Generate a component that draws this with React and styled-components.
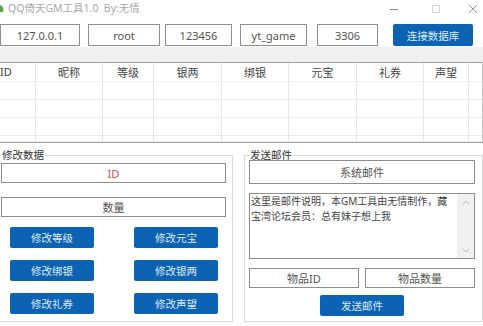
import React from 'react'
import styled, { createGlobalStyle } from 'styled-components'

const GlobalStyle = createGlobalStyle`
  html, body { margin: 0; padding: 0; background: #fff; }
  body {
    font-family: "Noto Sans", "Noto Sans CJK SC", sans-serif;
    font-size: 10.5px;
    color: #333;
  }
  * { box-sizing: border-box; }
`

const columns = ['ID', '昵称', '等级', '银两', '绑银', '元宝', '礼券', '声望', '']
const buttons = ['修改等级', '修改元宝', '修改绑银', '修改银两', '修改礼券', '修改声望']

const App = () => {
    return (
        <Window>
            <GlobalStyle />
            <TitleBar>
                <svg width="4" height="9" viewBox="0 0 4 9">
                    <path d="M0 1 C3 2 4 5 3 8 L0 8 Z" fill="#5aa845" />
                </svg>
                <Title>QQ倚天GM工具1.0&nbsp; By:无情</Title>
                <WinControls>
                    <WinButton>
                        <svg width="10" height="10" viewBox="0 0 10 10">
                            <path d="M1 5.5 H9" stroke="#8a8a8a" strokeWidth="1" />
                        </svg>
                    </WinButton>
                    <WinButton>
                        <svg width="10" height="10" viewBox="0 0 10 10">
                            <rect x="1.5" y="1.5" width="7" height="7" fill="none" stroke="#d4d4d4" strokeWidth="1" />
                        </svg>
                    </WinButton>
                    <WinButton>
                        <svg width="10" height="10" viewBox="0 0 10 10">
                            <path d="M1 1 L9 9 M9 1 L1 9" stroke="#999" strokeWidth="1" />
                        </svg>
                    </WinButton>
                </WinControls>
            </TitleBar>

            <ConnRow>
                <Field $w={80}>127.0.0.1</Field>
                <Field $w={72} $ml={8}>root</Field>
                <Field $w={67} $ml={5}>123456</Field>
                <Field $w={67} $ml={8}>yt_game</Field>
                <Field $w={61} $ml={10}>3306</Field>
                <BlueButton $w={80} $h={22} $ml={15}>连接数据库</BlueButton>
            </ConnRow>

            <Band />

            <Table>
                {columns.map((c, i) => (
                    <Cell key={'h' + i} $head $left={i === 0}>{c}</Cell>
                ))}
                {[0, 1, 2, 3].map(r =>
                    columns.map((c, i) => <Cell key={r + '-' + i} />)
                )}
            </Table>

            <Bottom>
                <Group $w={234} $ml={-1} $pad="0 6px 7px 1px">
                    <Legend>修改数据</Legend>
                    <Field $h={20} $mt={3} $color="#c9514c">ID</Field>
                    <Field $h={20} $mt={14}>数量</Field>
                    <ButtonGrid>
                        {buttons.map(b => (
                            <BlueButton key={b}>{b}</BlueButton>
                        ))}
                    </ButtonGrid>
                </Group>

                <Group $w={239} $pad="0 7px 5px 4px">
                    <Legend>发送邮件</Legend>
                    <Field $h={24}>系统邮件</Field>
                    <TextBox>
                        <TextBody>这里是邮件说明，本GM工具由无情制作，藏宝湾论坛会员：总有妹子想上我</TextBody>
                        <ScrollBar>
                            <svg width="8" height="5" viewBox="0 0 8 5">
                                <path d="M1 4 L4 1 L7 4" fill="none" stroke="#bdbdbd" strokeWidth="1" />
                            </svg>
                            <svg width="8" height="5" viewBox="0 0 8 5">
                                <path d="M1 1 L4 4 L7 1" fill="none" stroke="#bdbdbd" strokeWidth="1" />
                            </svg>
                        </ScrollBar>
                    </TextBox>
                    <ItemRow>
                        <Field $h={20}>物品ID</Field>
                        <Field $h={20}>物品数量</Field>
                    </ItemRow>
                    <SendRow>
                        <BlueButton>发送邮件</BlueButton>
                    </SendRow>
                </Group>
            </Bottom>
        </Window>
    )
}

const Window = styled.div`
    width: 483px;
    height: 326px;
    overflow: hidden;
    background: #fff;
    display: flex;
    flex-direction: column;
`

const TitleBar = styled.div`
    height: 24px;
    display: flex;
    align-items: flex-start;
    padding-top: 4px;
    svg { display: block; }
`

const Title = styled.span`
    margin-left: 4px;
    margin-top: -2px;
    color: #a9a9a9;
    font-size: 10.5px;
    line-height: 13px;
    white-space: pre;
`

const WinControls = styled.div`
    margin-left: auto;
    margin-right: 5px;
    display: flex;
    gap: 27px;
`

const WinButton = styled.div`
    width: 10px;
    height: 10px;
    &:first-child { margin-right: 5px; }
`

const ConnRow = styled.div`
    display: flex;
    height: 22px;
    flex-shrink: 0;
`

const Field = styled.div`
    width: ${p => (p.$w ? p.$w + 'px' : 'auto')};
    height: ${p => (p.$h ? p.$h + 'px' : 'auto')};
    margin-left: ${p => p.$ml || 0}px;
    margin-top: ${p => p.$mt || 0}px;
    flex-shrink: 0;
    border: 1px solid #8e8e8e;
    background: #fff;
    display: flex;
    align-items: center;
    justify-content: center;
    color: ${p => p.$color || '#555'};
    font-size: 11px;
`

const BlueButton = styled.button`
    width: ${p => p.$w || 84}px;
    height: ${p => p.$h || 21}px;
    margin-left: ${p => p.$ml || 0}px;
    flex-shrink: 0;
    padding: 0;
    border: none;
    border-radius: 2px;
    background: #0c63b3;
    color: #dfeaf7;
    font-family: inherit;
    font-size: 10.5px;
    cursor: pointer;
`

const Band = styled.div`
    height: 15px;
    margin-top: 1px;
    background: #f0f0f0;
    flex-shrink: 0;
`

const Table = styled.div`
    height: 81px;
    flex-shrink: 0;
    border-top: 1px solid #a0a0a0;
    border-bottom: 1px solid #a0a0a0;
    border-right: 1px solid #c4c4c4;
    display: grid;
    grid-template-columns: 36px 67px 51px 68px 67px 68px 67px 45px 1fr;
    grid-template-rows: 19px 18px 18px 18px 1fr;
    overflow: hidden;
`

const Cell = styled.div`
    border-right: 1px solid #e6e6e6;
    border-bottom: 1px solid ${p => (p.$head ? '#f2f2f2' : '#ebebeb')};
    display: flex;
    align-items: center;
    justify-content: ${p => (p.$left ? 'flex-start' : 'center')};
    padding-bottom: 1px;
    font-size: 11px;
    color: #444;
    &:nth-child(9n) { border-right: none; }
`

const Bottom = styled.div`
    display: flex;
    gap: 11px;
    margin-top: 7px;
    align-items: flex-start;
`

const Group = styled.fieldset`
    width: ${p => p.$w}px;
    margin: 0 0 0 ${p => p.$ml || 0}px;
    padding: ${p => p.$pad};
    border: 1px solid #d9d9d9;
    min-width: 0;
    display: flex;
    flex-direction: column;
    flex-shrink: 0;
`

const Legend = styled.legend`
    padding: 0 1px;
    font-size: 10.5px;
    line-height: 10px;
    color: #333;
`

const ButtonGrid = styled.div`
    margin-top: 10px;
    display: grid;
    grid-template-columns: 84px 84px;
    justify-content: space-between;
    row-gap: 12px;
    padding: 0 8px 0 9px;
`

const TextBox = styled.div`
    margin-top: 9px;
    height: 66px;
    border: 1px solid #8e8e8e;
    display: flex;
`

const TextBody = styled.div`
    flex: 1;
    padding: 0 4px 0 1px;
    font-size: 10px;
    line-height: 15px;
    color: #444;
`

const ScrollBar = styled.div`
    width: 17px;
    background: #f0f0f0;
    display: flex;
    flex-direction: column;
    justify-content: space-between;
    align-items: center;
    padding: 6px 0 5px;
    svg { display: block; }
`

const ItemRow = styled.div`
    margin-top: 9px;
    display: grid;
    grid-template-columns: 1fr 1fr;
    gap: 6px;
`

const SendRow = styled.div`
    margin-top: 7px;
    display: flex;
    justify-content: center;
`

export default App
